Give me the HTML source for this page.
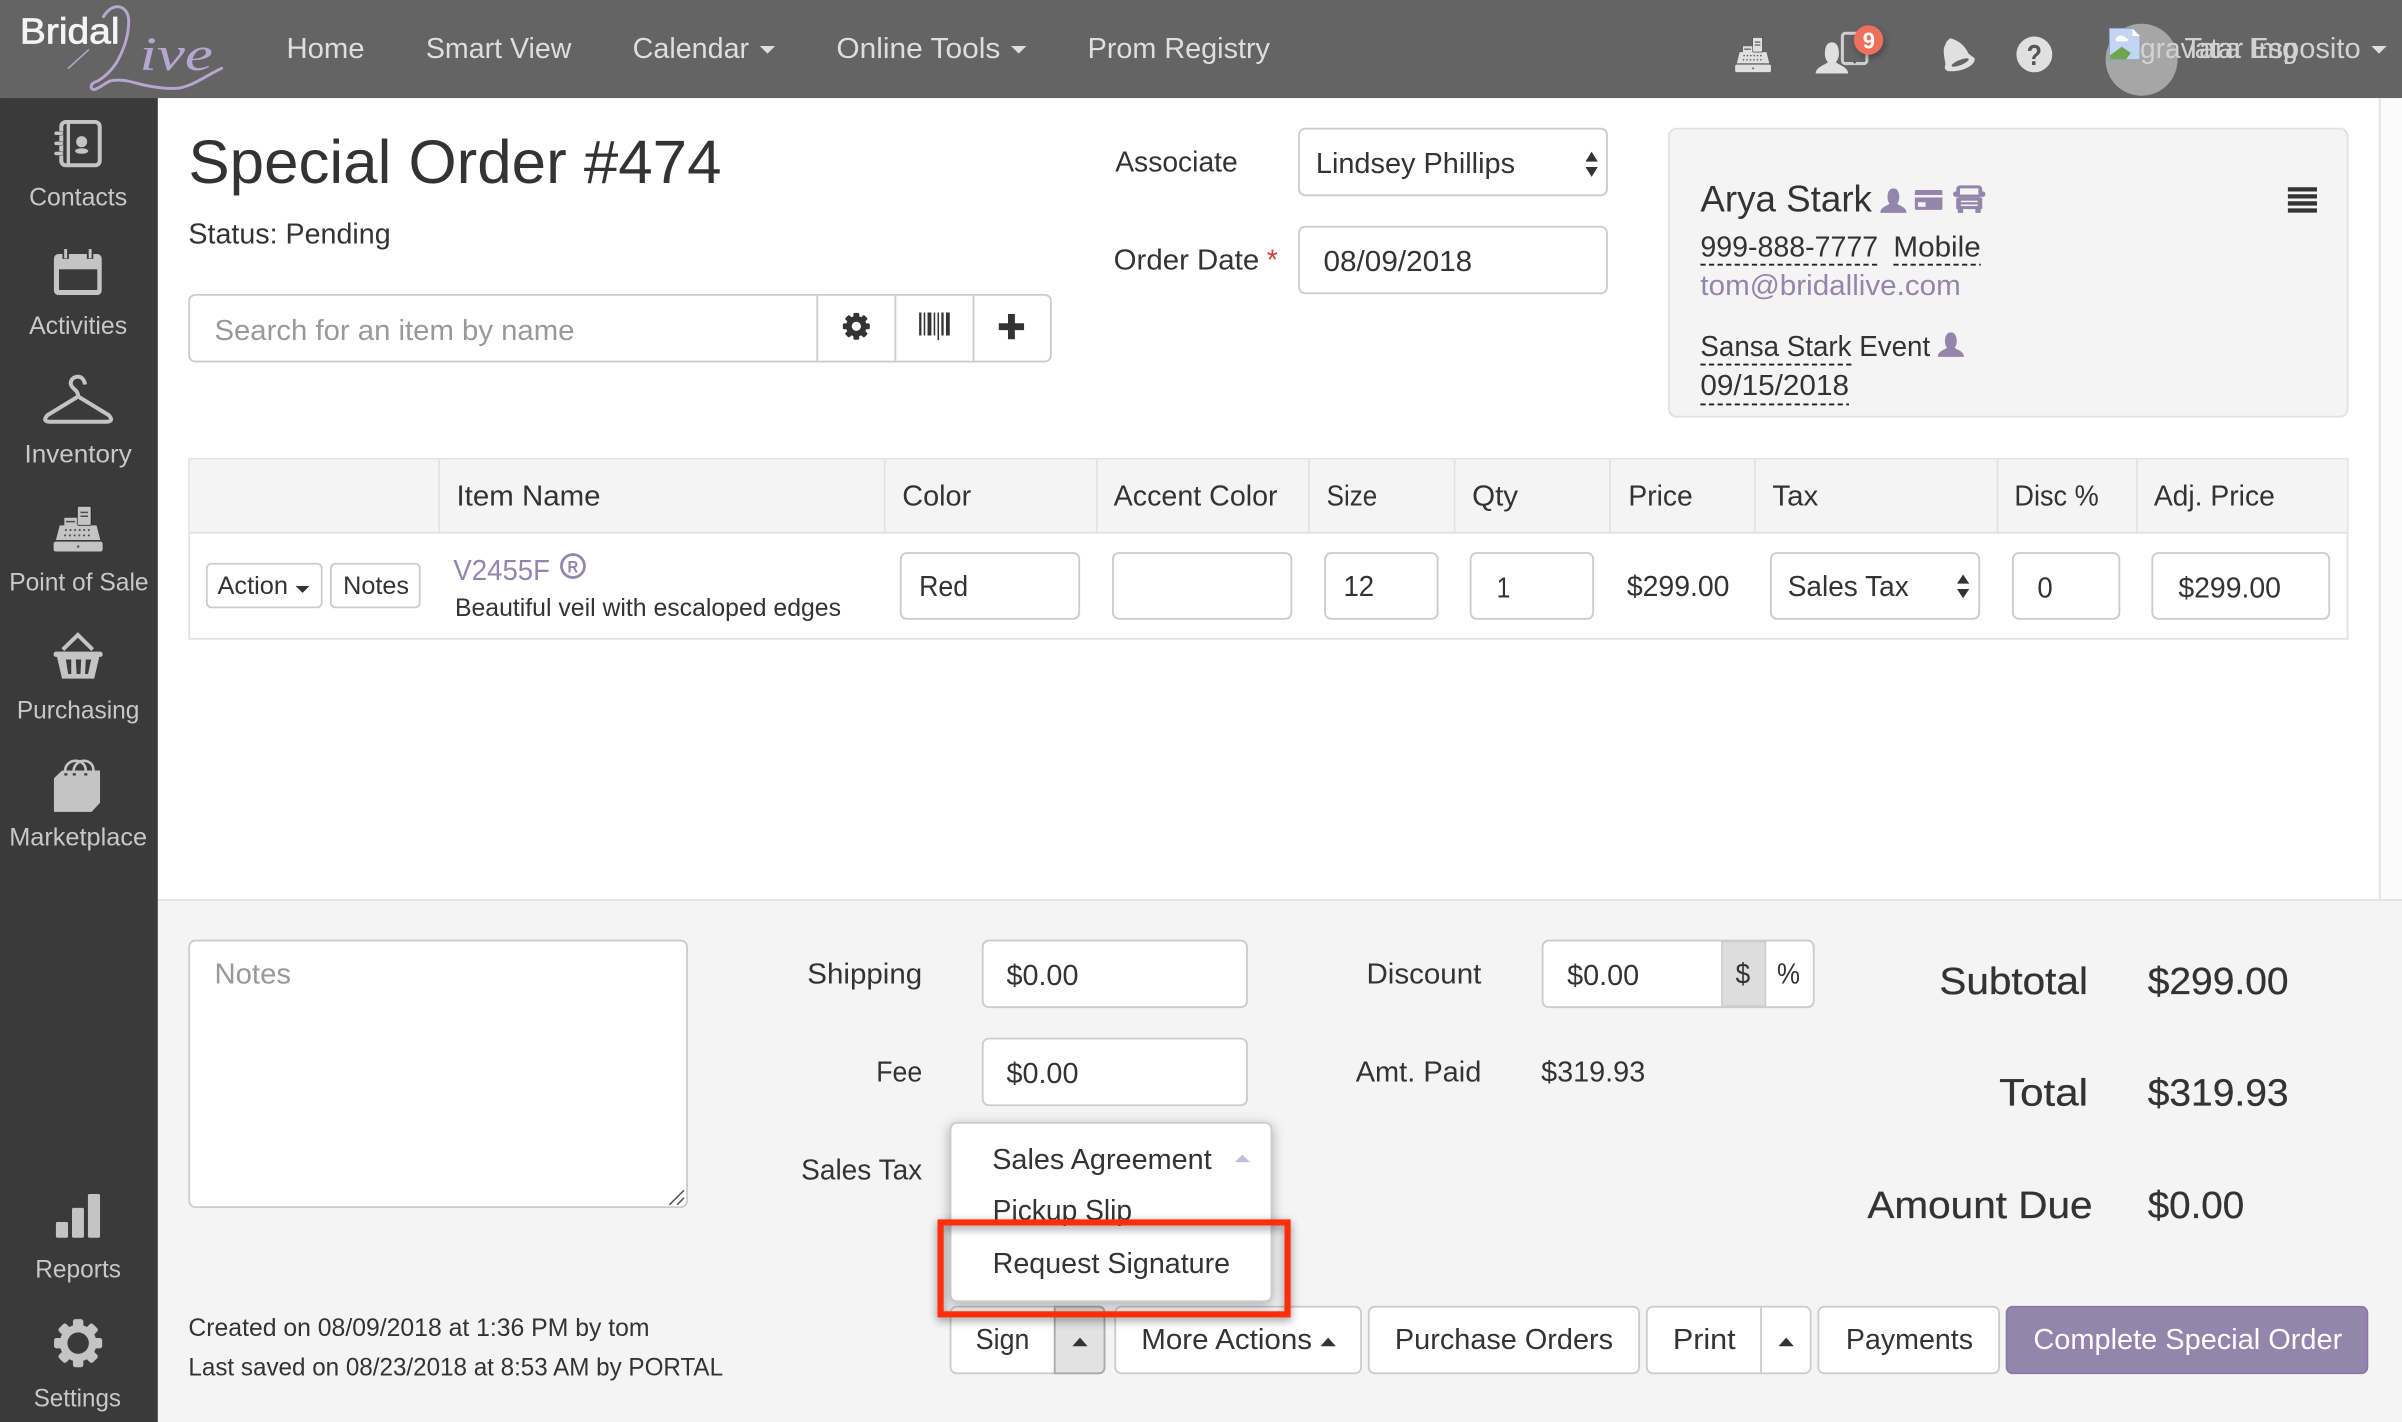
<!DOCTYPE html>
<html lang="en">
<head>
<meta charset="utf-8">
<title>Special Order #474</title>
<style>
html,body{margin:0;padding:0;background:#f4f4f4;width:2402px;height:1422px;overflow:hidden}
svg{display:block}
text{font-family:"Liberation Sans",sans-serif;fill:#333;font-size:18.5px}
.n{fill:#dedede;font-size:19px}
.s{fill:#c8c8c8;font-size:16.5px}
.p{fill:#9485ad}
.ph{fill:#999}
.m{font-size:16.5px}
.t{font-size:25px;stroke:#333;stroke-width:.18}
.box{fill:#fff;stroke:#ccc;stroke-width:1.2}
.ln{stroke:#e3e3e3;stroke-width:1.2}
.d{stroke:#222;stroke-width:1.2;stroke-dasharray:3.4 2.2;fill:none}
</style>
</head>
<body>
<svg xmlns="http://www.w3.org/2000/svg" width="2402" height="1422" viewBox="0 0 1568 928.27">
<defs>
<g id="reg">
<rect x="0" y="23.6" width="32" height="6.4" rx="1.4"/>
<path d="M1.5 22.5 4 13H7V8H16V13H28L30.5 22.5Z"/>
<rect x="15.500" y=".5" width="9" height="12.500" rx="1" stroke="#000" stroke-opacity=".55" stroke-width=".7"/>
<g fill="#000" fill-opacity=".6"><rect x="17.500" y="4" width="5" height="1"/><rect x="17.500" y="6.5" width="5" height="1"/><rect x="8" y="10" width="6" height="1"/>
<circle cx="16" cy="26.8" r=".8"/><circle cx="8" cy="16" r=".7"/><circle cx="11" cy="16" r=".7"/><circle cx="14" cy="16" r=".7"/><circle cx="17" cy="16" r=".7"/><circle cx="20" cy="16" r=".7"/><circle cx="23" cy="16" r=".7"/><circle cx="7.5" cy="19.5" r=".7"/><circle cx="10.6" cy="19.5" r=".7"/><circle cx="13.7" cy="19.5" r=".7"/><circle cx="16.8" cy="19.5" r=".7"/><circle cx="19.9" cy="19.5" r=".7"/><circle cx="23" cy="19.5" r=".7"/></g>
</g>
<g id="gear">
<circle r="12"/>
<rect x="-3.4" y="-15.7" width="6.8" height="31.4" rx="1.6"/><rect x="-3.4" y="-15.7" width="6.8" height="31.4" rx="1.6" transform="rotate(45)"/><rect x="-3.4" y="-15.7" width="6.8" height="31.4" rx="1.6" transform="rotate(90)"/><rect x="-3.4" y="-15.7" width="6.8" height="31.4" rx="1.6" transform="rotate(135)"/>
</g>
<path id="person" d="M0 16C0 12.300 4 11.500 6 10 4.800 8.500 4.500 6.500 4.700 4.700 5 1.500 6.500 0 8.500 0S12 1.500 12.300 4.700C12.500 6.500 12.200 8.500 11 10 13 11.500 17 12.300 17 16Z"/>
</defs>

<!-- backgrounds -->
<rect width="1568" height="929" fill="#f4f4f4"/>
<rect x="103" y="64" width="1465" height="523" fill="#fff"/>
<rect x="1553" y="64" width="15" height="523" fill="#fbfbfb"/>
<line x1="1553.500" y1="64" x2="1553.500" y2="587" class="ln"/>
<line x1="103" y1="587.500" x2="1568" y2="587.500" class="ln"/>
<rect width="1568" height="64" fill="#646464"/>
<rect y="64" width="103" height="865" fill="#3a3a3a"/>

<!-- logo -->
<text x="13" y="28.300" textLength="65" lengthAdjust="spacingAndGlyphs" style="fill:#f4f4f4;font-size:23.500px;stroke:#f4f4f4;stroke-width:.5">Bridal</text>
<g fill="none" stroke="#b5a7cf" stroke-linecap="round">
<path d="M44.600 44.600 57.700 32.600" stroke-width="1"/>
<path d="M67.500 10.900C70 7 73 4.600 76 4.400 81 4.200 84 8 84 14 84 24 80 34 76 41 72 47 67 51 64 52.800 60 54 58.600 56 60 58 62 60 67 55 72 52.800 80 51 87 54 94 55.500 101 57 108 58 115 57.700 125 57 135 49 144.700 44.600" stroke-width="1.900"/>
</g>
<text x="91" y="45.800" textLength="48" lengthAdjust="spacingAndGlyphs" style="font-family:'Liberation Serif',serif;font-style:italic;font-size:31px;fill:#b5a7cf">ive</text>

<!-- nav -->
<text class="n" x="187" y="38" textLength="51" lengthAdjust="spacingAndGlyphs">Home</text>
<text class="n" x="278" y="38" textLength="95" lengthAdjust="spacingAndGlyphs">Smart View</text>
<text class="n" x="413" y="38" textLength="76" lengthAdjust="spacingAndGlyphs">Calendar</text>
<path d="M496 30H506L501 35Z" fill="#dedede"/>
<text class="n" x="546" y="38" textLength="107" lengthAdjust="spacingAndGlyphs">Online Tools</text>
<path d="M660 30H670L665 35Z" fill="#dedede"/>
<text class="n" x="710" y="38" textLength="119" lengthAdjust="spacingAndGlyphs">Prom Registry</text>

<!-- header icons -->
<use href="#reg" transform="translate(1132.700 24) scale(.73 .77)" fill="#e0e0e0"/>
<rect x="1202.700" y="21.700" width="16" height="19.800" rx="2" fill="none" stroke="#cfcfcf" stroke-width="2"/>
<circle cx="1210.700" cy="40.700" r=".8" fill="#555"/>
<use href="#person" transform="translate(1184.700 27.200) scale(1.31 1.33)" fill="#e0e0e0" stroke="#646464" stroke-width=".7"/>
<circle cx="1219.800" cy="26.100" r="9.600" fill="#ee6f5b" style="filter:drop-shadow(1px 2px 2px rgba(0,0,0,.3))"/>
<text x="1216" y="31.500" textLength="8" lengthAdjust="spacingAndGlyphs" style="fill:#fff;font-size:15px;font-weight:bold">9</text>
<path d="M1273 25C1278 26 1283 30 1285 35L1289 38C1290 42 1282 47 1272 46.500 1269.500 46 1269 44 1270 42 1269 36 1268 32 1270 29 1270.500 27 1272 26 1273 25Z" fill="#e0e0e0"/>
<ellipse cx="1279.600" cy="40.800" rx="6" ry="1.700" transform="rotate(-22 1279.600 40.800)" fill="#646464"/>
<circle cx="1328" cy="35.500" r="11.700" fill="#e0e0e0"/>
<text x="1323" y="42.500" textLength="10" lengthAdjust="spacingAndGlyphs" style="fill:#555;font-size:19px;font-weight:bold">?</text>
<circle cx="1398" cy="39" r="23.500" fill="#a6a6a6"/>
<path d="M1377 18.500H1392L1397 23.500V39H1377Z" fill="#c3d5f2" stroke="#8a9cb8" stroke-width=".6"/>
<path d="M1392 18.500V23.500H1397Z" fill="#fff"/>
<path d="M1381 26C1381 23 1386 22 1388 25 1390 25 1390 27 1388 27H1382Z" fill="#fff"/>
<path d="M1377.500 38.700V36L1385 30.500 1391 34.500 1388 38.700Z" fill="#6ea64f"/>
<text class="n" x="1397" y="38" textLength="103" lengthAdjust="spacingAndGlyphs" style="fill:#d2d2d2">gravatar Img</text>
<text class="n" x="1426" y="38" textLength="115" lengthAdjust="spacingAndGlyphs" style="fill:#d2d2d2">Tara Esposito</text>
<path d="M1548 30H1558L1553 35Z" fill="#dedede"/>

<!-- sidebar icons -->
<g fill="#c4c4c4">
<rect x="40" y="79.600" width="25.100" height="28.300" rx="3" fill="#3a3a3a" stroke="#c4c4c4" stroke-width="2.600"/>
<rect x="43.500" y="79" width="2.200" height="29"/>
<circle cx="53.300" cy="92.500" r="3.600"/>
<ellipse cx="53.300" cy="98.600" rx="4.300" ry="1.800"/>
<rect x="35.300" y="85.700" width="6" height="2.600" rx="1.200" stroke="#3a3a3a" stroke-width=".3"/>
<rect x="35.300" y="92.300" width="6" height="2.600" rx="1.200" stroke="#3a3a3a" stroke-width=".3"/>
<rect x="35.300" y="98.900" width="6" height="2.600" rx="1.200" stroke="#3a3a3a" stroke-width=".3"/>

<rect x="35.200" y="165.800" width="31.200" height="26.800" rx="3"/>
<rect x="38.500" y="175.800" width="25" height="13.500" fill="#3a3a3a"/>
<rect x="40.800" y="162" width="4.200" height="7" fill="#3a3a3a"/>
<rect x="41.900" y="162.600" width="1.900" height="6"/>
<rect x="56.700" y="162" width="4.200" height="7" fill="#3a3a3a"/>
<rect x="57.900" y="162.600" width="1.900" height="6"/>

<path d="M55.500 251C55 247.500 53 245.900 51 245.900 48 245.900 46 248 46.200 250.500 46.500 254 51 254 51 258.800L31 271Q27.500 275 32 275.300H70Q74.500 275 71 271L51 258.800" fill="none" stroke="#c4c4c4" stroke-width="2.600"/>

<use href="#reg" x="35" y="330"/>

<path d="M41 424 50.800 414.500 60.500 424" fill="none" stroke="#c4c4c4" stroke-width="2.600"/>
<rect x="35" y="425.400" width="32" height="3.400" rx="1.500"/>
<path d="M37 428H65L61.500 443H40.500Z"/>
<path d="M43 430.500H46.500L46.500 440H44.500ZM49.500 430.500H53L52.500 440H50ZM56 430.500H59.500L57.500 440H55.500Z" fill="#3a3a3a"/>

<path d="M35.200 508 40.500 503H65.300V524L59.800 530H35.200Z"/>
<g fill="none" stroke="#c4c4c4" stroke-width="1.700"><path d="M42.500 503C43 494.500 56 494.500 56 503"/><path d="M48 503C49 494.500 61 494.500 61 503"/></g>
<path d="M42 505.500H44M55 505.500H57M47.500 505.500H49.500" stroke="#3a3a3a" stroke-width="1.400" fill="none"/>

<rect x="36.500" y="797.700" width="7.900" height="10.300" rx="1"/>
<rect x="47" y="788.500" width="7.800" height="19.500" rx="1"/>
<rect x="57.400" y="779.400" width="7.900" height="28.600" rx="1"/>

<use href="#gear" x="51" y="876.800"/>
<circle cx="51" cy="876.800" r="7" fill="#3a3a3a"/>
</g>

<text class="s" x="19" y="134" textLength="64" lengthAdjust="spacingAndGlyphs">Contacts</text>
<text class="s" x="19" y="218" textLength="64" lengthAdjust="spacingAndGlyphs">Activities</text>
<text class="s" x="16" y="302" textLength="70" lengthAdjust="spacingAndGlyphs">Inventory</text>
<text class="s" x="6" y="385.500" textLength="91" lengthAdjust="spacingAndGlyphs">Point of Sale</text>
<text class="s" x="11" y="469" textLength="80" lengthAdjust="spacingAndGlyphs">Purchasing</text>
<text class="s" x="6" y="552" textLength="90" lengthAdjust="spacingAndGlyphs">Marketplace</text>
<text class="s" x="23" y="834" textLength="56" lengthAdjust="spacingAndGlyphs">Reports</text>
<text class="s" x="22" y="918" textLength="57" lengthAdjust="spacingAndGlyphs">Settings</text>

<!-- title -->
<text x="123" y="119.500" textLength="348" lengthAdjust="spacingAndGlyphs" style="font-size:40px">Special Order #474</text>
<text x="123" y="159" textLength="132" lengthAdjust="spacingAndGlyphs">Status: Pending</text>

<!-- search -->
<rect class="box" x="123.500" y="192.500" width="562.500" height="43.500" rx="4"/>
<line x1="533.500" y1="192.500" x2="533.500" y2="236" stroke="#ccc" stroke-width="1.200"/>
<line x1="584.500" y1="192.500" x2="584.500" y2="236" stroke="#ccc" stroke-width="1.200"/>
<line x1="635.500" y1="192.500" x2="635.500" y2="236" stroke="#ccc" stroke-width="1.200"/>
<text class="ph" x="140" y="222" textLength="235" lengthAdjust="spacingAndGlyphs">Search for an item by name</text>
<use href="#gear" transform="translate(559 213) scale(.56)" fill="#333"/>
<circle cx="559" cy="213" r="3" fill="#fff"/>
<path d="M600 204h1.500v15H600zM603 204h1v15h-1zM605.500 204h2.500v15h-2.500zM609.500 204h1v15h-1zM612 204h1v18h-1zM614.500 204h1.500v15h-1.500zM617.500 204h2.500v15h-2.500z" fill="#333"/>
<path d="M658 205h4.500v6h6v4.500h-6v6H658v-6h-6V211h6z" fill="#333"/>

<!-- associate / date -->
<text x="728" y="112" textLength="80" lengthAdjust="spacingAndGlyphs">Associate</text>
<rect class="box" x="848" y="84" width="201" height="43.500" rx="4"/>
<text x="859" y="113" textLength="130" lengthAdjust="spacingAndGlyphs">Lindsey Phillips</text>
<path d="M1035 105.500H1043L1039 99ZM1035 109H1043L1039 115.500Z" fill="#333"/>
<text x="727" y="176" textLength="95" lengthAdjust="spacingAndGlyphs">Order Date</text>
<text x="827" y="176" style="fill:#c9403c">*</text>
<rect class="box" x="848" y="148" width="201" height="43.500" rx="4"/>
<text x="864" y="177" textLength="97" lengthAdjust="spacingAndGlyphs">08/09/2018</text>

<!-- contact panel -->
<rect x="1089.500" y="84" width="443" height="188" rx="5" fill="#f4f4f4" stroke="#e2e2e2" stroke-width="1.200"/>
<text x="1110" y="138" textLength="112" lengthAdjust="spacingAndGlyphs" style="font-size:24px">Arya Stark</text>
<use href="#person" x="1227.500" y="123" fill="#9485ad"/>
<rect x="1250" y="124" width="18" height="13" rx="1" fill="#9485ad"/>
<rect x="1250" y="127.300" width="18" height="1.600" fill="#f4f4f4"/>
<rect x="1252" y="132" width="5" height="3" fill="#f4f4f4"/>
<g fill="#9485ad">
<rect x="1277" y="121" width="17" height="8" rx="2.500"/>
<rect x="1275" y="125" width="21" height="3.500" rx="1.500"/>
<rect x="1277" y="129" width="17" height="7.500"/>
<rect x="1278" y="136" width="3.500" height="3"/>
<rect x="1289.500" y="136" width="3.500" height="3"/>
</g>
<rect x="1279.500" y="123" width="12" height="4" fill="#f4f4f4"/>
<rect x="1280" y="131" width="11" height="1" fill="#f4f4f4"/>
<rect x="1280" y="133.500" width="11" height="1" fill="#f4f4f4"/>

<text x="1110" y="167.500" textLength="116" lengthAdjust="spacingAndGlyphs">999-888-7777</text>
<text x="1236" y="167.500" textLength="57" lengthAdjust="spacingAndGlyphs">Mobile</text>
<line class="d" x1="1110" y1="172.800" x2="1226" y2="172.800"/>
<line class="d" x1="1236" y1="172.800" x2="1293" y2="172.800"/>
<text class="p" x="1110" y="192.500" textLength="170" lengthAdjust="spacingAndGlyphs">tom@bridallive.com</text>
<text x="1110" y="232.500" textLength="150" lengthAdjust="spacingAndGlyphs">Sansa Stark Event</text>
<line class="d" x1="1110" y1="238" x2="1209" y2="238"/>
<use href="#person" x="1265" y="217" fill="#9485ad"/>
<text x="1110" y="258" textLength="97" lengthAdjust="spacingAndGlyphs">09/15/2018</text>
<line class="d" x1="1110" y1="264" x2="1207" y2="264"/>
<path d="M1493.500 122.200h19v2.800h-19zM1493.500 126.800h19v2.800h-19zM1493.500 131.400h19v2.800h-19zM1493.500 136h19v2.800h-19z" fill="#333"/>

<!-- table -->
<rect x="123.500" y="299.500" width="1409" height="117.500" fill="#fff" stroke="#e3e3e3" stroke-width="1.200"/>
<rect x="124" y="300" width="1408" height="47.500" fill="#f4f4f4"/>
<line class="ln" x1="123.500" y1="347.800" x2="1532.500" y2="347.800"/>
<g stroke="#e3e3e3" stroke-width="1.200">
<line x1="286.700" y1="300" x2="286.700" y2="347.500"/><line x1="577.500" y1="300" x2="577.500" y2="347.500"/><line x1="716" y1="300" x2="716" y2="347.500"/><line x1="854.500" y1="300" x2="854.500" y2="347.500"/><line x1="949.500" y1="300" x2="949.500" y2="347.500"/><line x1="1051" y1="300" x2="1051" y2="347.500"/><line x1="1145.500" y1="300" x2="1145.500" y2="347.500"/><line x1="1304" y1="300" x2="1304" y2="347.500"/><line x1="1395" y1="300" x2="1395" y2="347.500"/>
</g>
<text x="298" y="330" textLength="94" lengthAdjust="spacingAndGlyphs">Item Name</text>
<text x="589" y="330" textLength="45" lengthAdjust="spacingAndGlyphs">Color</text>
<text x="727" y="330" textLength="107" lengthAdjust="spacingAndGlyphs">Accent Color</text>
<text x="866" y="330" textLength="33" lengthAdjust="spacingAndGlyphs">Size</text>
<text x="961" y="330" textLength="30" lengthAdjust="spacingAndGlyphs">Qty</text>
<text x="1063" y="330" textLength="42" lengthAdjust="spacingAndGlyphs">Price</text>
<text x="1157" y="330" textLength="30" lengthAdjust="spacingAndGlyphs">Tax</text>
<text x="1315" y="330" textLength="55" lengthAdjust="spacingAndGlyphs">Disc %</text>
<text x="1406" y="330" textLength="79" lengthAdjust="spacingAndGlyphs">Adj. Price</text>

<rect class="box" x="135" y="368" width="75" height="28.500" rx="3"/>
<text class="m" x="142" y="387.700" textLength="46" lengthAdjust="spacingAndGlyphs">Action</text>
<path d="M193 382.500H202L197.500 387Z" fill="#333"/>
<rect class="box" x="216" y="368" width="58" height="28.500" rx="3"/>
<text class="m" x="224" y="387.700" textLength="43" lengthAdjust="spacingAndGlyphs">Notes</text>
<text class="p" x="296" y="378.600" textLength="63" lengthAdjust="spacingAndGlyphs" style="font-size:19px">V2455F</text>
<circle cx="374" cy="369.500" r="7.500" fill="none" stroke="#9485ad" stroke-width="1.800"/>
<text x="370.500" y="373.700" textLength="7" lengthAdjust="spacingAndGlyphs" style="fill:#9485ad;font-size:11px;font-weight:bold">R</text>
<text class="m" x="297" y="402" textLength="252" lengthAdjust="spacingAndGlyphs">Beautiful veil with escaloped edges</text>

<rect class="box" x="588" y="361" width="116.500" height="43" rx="4"/>
<text x="600" y="389" textLength="32" lengthAdjust="spacingAndGlyphs">Red</text>
<rect class="box" x="726.500" y="361" width="116.500" height="43" rx="4"/>
<rect class="box" x="865" y="361" width="73.500" height="43" rx="4"/>
<text x="877" y="389" textLength="20" lengthAdjust="spacingAndGlyphs">12</text>
<rect class="box" x="960" y="361" width="80" height="43" rx="4"/>
<text x="977" y="390" textLength="9" lengthAdjust="spacingAndGlyphs">1</text>
<text x="1062" y="389" textLength="67" lengthAdjust="spacingAndGlyphs">$299.00</text>
<rect class="box" x="1156" y="361" width="136" height="43" rx="4"/>
<text x="1167" y="389" textLength="79" lengthAdjust="spacingAndGlyphs">Sales Tax</text>
<path d="M1277.500 381H1285.500L1281.500 375ZM1277.500 384.500H1285.500L1281.500 390.500Z" fill="#333"/>
<rect class="box" x="1314" y="361" width="69.500" height="43" rx="4"/>
<text x="1330" y="390" textLength="10" lengthAdjust="spacingAndGlyphs">0</text>
<rect class="box" x="1405" y="361" width="115.500" height="43" rx="4"/>
<text x="1422" y="390" textLength="67" lengthAdjust="spacingAndGlyphs">$299.00</text>

<!-- bottom -->
<rect class="box" x="123.500" y="614" width="325" height="174" rx="4"/>
<text class="ph" x="140" y="642" textLength="50" lengthAdjust="spacingAndGlyphs">Notes</text>
<path d="M437 786.500 446.500 777M442 786.500 446.500 782" stroke="#555" stroke-width="1" fill="none"/>

<text x="527" y="642" textLength="75" lengthAdjust="spacingAndGlyphs">Shipping</text>
<rect class="box" x="641.500" y="614" width="172.500" height="43.500" rx="4"/>
<text x="657" y="643" textLength="47" lengthAdjust="spacingAndGlyphs">$0.00</text>
<text x="572" y="706" textLength="30" lengthAdjust="spacingAndGlyphs">Fee</text>
<rect class="box" x="641.500" y="678" width="172.500" height="43.500" rx="4"/>
<text x="657" y="707" textLength="47" lengthAdjust="spacingAndGlyphs">$0.00</text>
<text x="523" y="770" textLength="79" lengthAdjust="spacingAndGlyphs">Sales Tax</text>

<text x="892" y="642" textLength="75" lengthAdjust="spacingAndGlyphs">Discount</text>
<rect class="box" x="1007" y="614" width="177" height="43.500" rx="4"/>
<rect x="1124" y="614.600" width="28.500" height="42.300" fill="#ddd" stroke="#ccc" stroke-width="1"/>
<text x="1023" y="643" textLength="47" lengthAdjust="spacingAndGlyphs">$0.00</text>
<text x="1133" y="642" textLength="9.500" lengthAdjust="spacingAndGlyphs">$</text>
<text x="1160" y="642" textLength="15" lengthAdjust="spacingAndGlyphs">%</text>
<text x="885" y="706" textLength="82" lengthAdjust="spacingAndGlyphs">Amt. Paid</text>
<text x="1006" y="706" textLength="68" lengthAdjust="spacingAndGlyphs">$319.93</text>

<text class="t" x="1266" y="648.800" textLength="97" lengthAdjust="spacingAndGlyphs">Subtotal</text>
<text class="t" x="1402" y="648.800" textLength="92" lengthAdjust="spacingAndGlyphs">$299.00</text>
<text class="t" x="1305" y="721.800" textLength="58" lengthAdjust="spacingAndGlyphs">Total</text>
<text class="t" x="1402" y="721.800" textLength="92" lengthAdjust="spacingAndGlyphs">$319.93</text>
<text class="t" x="1219" y="795" textLength="147" lengthAdjust="spacingAndGlyphs">Amount Due</text>
<text class="t" x="1402" y="795" textLength="63" lengthAdjust="spacingAndGlyphs">$0.00</text>

<text class="m" x="123" y="872" textLength="301" lengthAdjust="spacingAndGlyphs">Created on 08/09/2018 at 1:36 PM by tom</text>
<text class="m" x="123" y="898" textLength="349" lengthAdjust="spacingAndGlyphs">Last saved on 08/23/2018 at 8:53 AM by PORTAL</text>

<!-- buttons -->
<rect class="box" x="620.500" y="853" width="100.500" height="43.500" rx="4"/>
<path d="M688.500 853H717Q721 853 721 857V892.500Q721 896.500 717 896.500H688.500Z" fill="#e2e2e2" stroke="#aaa" stroke-width="1.200"/>
<text x="637" y="880.700" textLength="35" lengthAdjust="spacingAndGlyphs">Sign</text>
<path d="M700 878.800H710L705 873.200Z" fill="#333"/>
<rect class="box" x="728" y="853" width="160.500" height="43.500" rx="4"/>
<text x="745" y="880.700" textLength="111.500" lengthAdjust="spacingAndGlyphs">More Actions</text>
<path d="M862 878.800H872L867 873.200Z" fill="#333"/>
<rect class="box" x="893.500" y="853" width="176.500" height="43.500" rx="4"/>
<text x="910.600" y="880.700" textLength="142.400" lengthAdjust="spacingAndGlyphs">Purchase Orders</text>
<rect class="box" x="1075" y="853" width="107" height="43.500" rx="4"/>
<line x1="1149.600" y1="853" x2="1149.600" y2="896.500" stroke="#ccc" stroke-width="1.200"/>
<text x="1092" y="880.700" textLength="41" lengthAdjust="spacingAndGlyphs">Print</text>
<path d="M1161 878.800H1171L1166 873.200Z" fill="#333"/>
<rect class="box" x="1187" y="853" width="118" height="43.500" rx="4"/>
<text x="1205" y="880.700" textLength="83" lengthAdjust="spacingAndGlyphs">Payments</text>
<rect x="1309.800" y="853" width="235.700" height="43.500" rx="4" fill="#9485ad" stroke="#8878a3" stroke-width="1"/>
<text x="1327.400" y="880.700" textLength="201.600" lengthAdjust="spacingAndGlyphs" style="fill:#fff">Complete Special Order</text>

<!-- dropdown -->
<rect x="620.500" y="733" width="209.500" height="116.500" rx="4" fill="#fff" stroke="#ccc" stroke-width="1.200" style="filter:drop-shadow(0 2px 4px rgba(0,0,0,.3))"/>
<text x="647.700" y="763" textLength="143.300" lengthAdjust="spacingAndGlyphs">Sales Agreement</text>
<path d="M806 758.600H816L811 753.800Z" fill="#c5bbdc"/>
<text x="648" y="796.500" textLength="91" lengthAdjust="spacingAndGlyphs">Pickup Slip</text>
<text x="648" y="831" textLength="155" lengthAdjust="spacingAndGlyphs">Request Signature</text>

<!-- highlight -->
<rect x="614" y="798" width="226.500" height="60" fill="none" stroke="#ff2d0a" stroke-width="4" style="filter:drop-shadow(0 2px 3px rgba(0,0,0,.45))"/>
</svg>
</body>
</html>
